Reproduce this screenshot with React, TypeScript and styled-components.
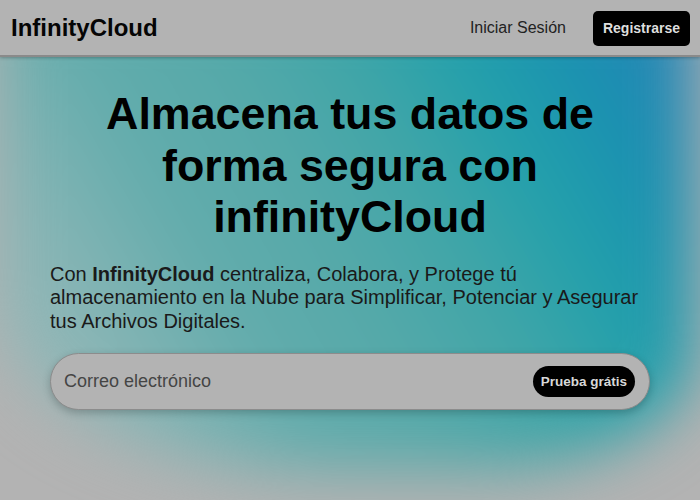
import React from "react";
import styled, { createGlobalStyle } from "styled-components";

const Global = createGlobalStyle`
  html, body { margin: 0; padding: 0; background: #b3b3b3; }
  body { font-family: "Liberation Sans", Arial, sans-serif; color: #000; }
  * { box-sizing: border-box; }
`;

const Page = styled.div`
  width: 700px;
  height: 500px;
  overflow: hidden;
  background: #b3b3b3;
  display: flex;
  flex-direction: column;
`;

const Header = styled.header`
  position: relative;
  z-index: 2;
  height: 57px;
  flex: none;
  display: flex;
  align-items: center;
  justify-content: space-between;
  padding: 0 10px 0 11px;
  background: #b3b3b3;
  border-bottom: 2px solid #8a8a8a;
  box-shadow: 0 1px 3px rgba(0, 0, 0, 0.25);
`;

const Logo = styled.div`
  font-size: 24px;
  font-weight: 700;
  color: #050505;
`;

const Nav = styled.nav`
  display: flex;
  align-items: center;
  gap: 27px;
`;

const NavLink = styled.a`
  font-size: 16px;
  color: #222;
  text-decoration: none;
`;

const SignUp = styled.button`
  height: 35px;
  padding: 0 10px;
  border: none;
  border-radius: 5px;
  background: #000;
  color: #dedede;
  font-family: inherit;
  font-size: 14px;
  font-weight: 700;
  margin-top: 1px;
`;

const Hero = styled.section`
  position: relative;
  flex: 1;
  padding-top: 31px;
  &::before {
    content: "";
    position: absolute;
    left: -4px;
    right: 6px;
    top: -60px;
    bottom: 30px;
    background: linear-gradient(
      60deg,
      #a6baba 0%,
      #84b4b4 20%,
      #62acac 34%,
      #55a9a9 48%,
      #3ea5a8 62%,
      #22a0ab 73%,
      #1a90b1 85%,
      #2b7fb8 100%
    );
    border-radius: 0 0 30% 45% / 0 0 25% 35%;
    filter: blur(30px);
    z-index: 0;
  }
`;

const Content = styled.div`
  position: relative;
  z-index: 1;
  width: 600px;
  margin: 0 auto;
  display: flex;
  flex-direction: column;
`;

const Title = styled.h1`
  margin: 0;
  font-size: 44.8px;
  font-weight: 700;
  line-height: 51.5px;
  text-align: center;
  color: #000;
`;

const Lead = styled.p`
  margin: 20px 0 0;
  font-size: 20px;
  line-height: 23.5px;
  color: #1a1a1a;
  b { font-weight: 700; }
`;

const Signup = styled.form`
  margin-top: 20px;
  height: 57px;
  display: flex;
  align-items: center;
  padding: 0 14px 0 13px;
  border: 1px solid #8c8c8c;
  border-radius: 29px;
  background: #b3b3b3;
  box-shadow: 0 3px 8px rgba(0, 0, 0, 0.22);
`;

const Email = styled.input`
  flex: 1;
  border: none;
  outline: none;
  background: transparent;
  font-family: inherit;
  font-size: 18px;
  color: #333;
  padding: 0;
  &::placeholder { color: #454545; }
`;

const TryButton = styled.button`
  height: 31px;
  padding: 0 8px;
  border: none;
  border-radius: 16px;
  background: #000;
  color: #d8d8d8;
  font-family: inherit;
  font-size: 13.5px;
  font-weight: 700;
`;

export default function App() {
  return (
    <>
      <Global />
      <Page>
        <Header>
          <Logo>InfinityCloud</Logo>
          <Nav>
            <NavLink href="#">Iniciar Sesión</NavLink>
            <SignUp>Registrarse</SignUp>
          </Nav>
        </Header>
        <Hero>
          <Content>
            <Title>
              Almacena tus datos de forma segura con infinityCloud
            </Title>
            <Lead>
              Con <b>InfinityCloud</b> centraliza, Colabora, y Protege tú almacenamiento en la Nube para
              Simplificar, Potenciar y Asegurar tus Archivos Digitales.
            </Lead>
            <Signup onSubmit={(e) => e.preventDefault()}>
              <Email placeholder="Correo electrónico" />
              <TryButton type="submit">Prueba grátis</TryButton>
            </Signup>
          </Content>
        </Hero>
      </Page>
    </>
  );
}
